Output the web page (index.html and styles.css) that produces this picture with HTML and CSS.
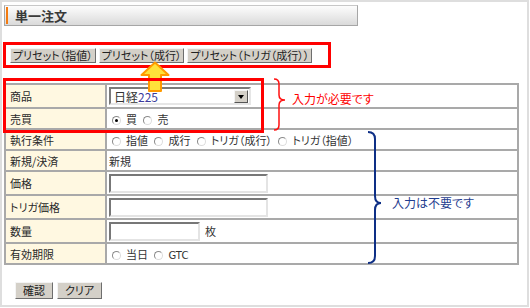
FILE: index.html
```html
<!DOCTYPE html>
<html lang="ja">

<head>
    <meta charset="UTF-8">
    <title>単一注文</title>
    <link rel="stylesheet" href="styles.css">
</head>

<body>
    <div class="frame">
        <div class="title-bar">
            <h1>単一注文</h1>
        </div>

        <div class="preset-box">
            <button class="btn">プリセット（指値）</button>
            <button class="btn">プリセット（成行）</button>
            <button class="btn">プリセット（トリガ（成行））</button>
        </div>

        <table class="order">
            <tr class="row-tall">
                <th>商品</th>
                <td>
                    <div class="select">
                        <span class="select-value">日経<span class="num">225</span></span>
                        <span class="select-btn"></span>
                    </div>
                </td>
            </tr>
            <tr>
                <th>売買</th>
                <td>
                    <span class="radio checked"></span><span class="opt">買</span>
                    <span class="radio"></span><span class="opt">売</span>
                </td>
            </tr>
            <tr>
                <th>執行条件</th>
                <td>
                    <span class="radio"></span><span class="opt">指値</span>
                    <span class="radio"></span><span class="opt">成行</span>
                    <span class="radio"></span><span class="opt">トリガ（成行）</span>
                    <span class="radio"></span><span class="opt">トリガ（指値）</span>
                </td>
            </tr>
            <tr>
                <th>新規/決済</th>
                <td class="plain">新規</td>
            </tr>
            <tr class="row-tall">
                <th>価格</th>
                <td><input type="text" class="text-input"></td>
            </tr>
            <tr class="row-tall">
                <th>トリガ価格</th>
                <td><input type="text" class="text-input"></td>
            </tr>
            <tr class="row-tall">
                <th>数量</th>
                <td><input type="text" class="text-input qty"><span class="unit">枚</span></td>
            </tr>
            <tr>
                <th>有効期限</th>
                <td>
                    <span class="radio"></span><span class="opt">当日</span>
                    <span class="radio"></span><span class="opt latin">GTC</span>
                </td>
            </tr>
        </table>

        <div class="actions">
            <button class="btn btn-lg">確認</button>
            <button class="btn btn-lg">クリア</button>
        </div>

        <!-- annotations -->
        <svg class="arrow" width="30" height="31" viewBox="0 0 30 31">
            <polygon points="15,1.5 28.5,14 21,14 21,30 9,30 9,14 1.5,14" fill="#ffe23a" stroke="#ff9a00" stroke-width="2" stroke-linejoin="round" />
        </svg>
        <div class="mark-required"></div>
        <svg class="brace-red" width="14" height="53" viewBox="0 0 14 53">
            <path d="M1,1 Q6,1 6,6 L6,17 Q6,22 12,22 Q6,22 6,27 L6,47 Q6,52 1,52" fill="none" stroke="#ff1010" stroke-width="1.5" />
        </svg>
        <p class="note note-red">入力が必要です</p>
        <svg class="brace-blue" width="16" height="133" viewBox="0 0 16 133">
            <path d="M1,1 Q8,1 8,8 L8,65 Q8,72 14,72 Q8,72 8,79 L8,125 Q8,132 1,132" fill="none" stroke="#0e2f86" stroke-width="2" />
        </svg>
        <p class="note note-blue">入力は不要です</p>
    </div>
</body>

</html>
```

FILE: styles.css
```css
* {
    box-sizing: border-box;
}

body {
    margin: 0;
    background: #fff;
    font-family: "Noto Sans CJK JP", sans-serif;
    font-size: 11px;
    font-feature-settings: "palt";
    color: #333;
}

.frame {
    position: relative;
    width: 529px;
    height: 307px;
    border: 2px solid #dedede;
}

.title-bar {
    margin: 3px 0 0 2px;
    width: 354px;
    height: 21px;
    padding: 1px 0 1px 1px;
    border: 1px solid #a6a6a6;
    border-top-color: #c8c8c8;
    background: linear-gradient(#fdfdfd, #dadada);
}

.title-bar h1 {
    margin: 0;
    height: 100%;
    padding-left: 7px;
    border-left: 2px solid #f47b10;
    font-size: 13px;
    line-height: 17px;
    font-weight: bold;
    color: #3a3a3a;
}

.preset-box {
    display: flex;
    gap: 3px;
    width: fit-content;
    margin: 16px 0 0 1px;
    padding: 3px 16px 2px 4px;
    border: 3px solid #ff0000;
}

.btn {
    height: 15px;
    padding: 0 2px;
    background: #d4d0c8;
    border: 1px solid;
    border-color: #f4f4f4 #6e6e6e #6e6e6e #f4f4f4;
    font-family: inherit;
    font-size: 11px;
    font-feature-settings: "palt";
    line-height: 13px;
    color: #222;
}

.btn-lg {
    height: 17px;
    padding: 0 7px;
    line-height: 15px;
}

.order {
    margin: 15px 0 0 2px;
    width: 515px;
    border-collapse: collapse;
}

.order th,
.order td {
    height: 21px;
    padding: 0 0 0 2px;
    border: 2px solid #a9a9a9;
    text-align: left;
    vertical-align: middle;
    font-weight: normal;
    white-space: nowrap;
}

.order th {
    width: 101px;
    padding-left: 4px;
    background: #fff8e1;
    color: #2a2a2a;
}

.order .row-tall th,
.order .row-tall td {
    height: 24px;
}

.select {
    display: flex;
    align-items: center;
    justify-content: space-between;
    width: 142px;
    height: 18px;
    padding: 0 1px 0 3px;
    border: 2px solid;
    border-color: #7a7a7a #e6e6e6 #e6e6e6 #7a7a7a;
    background: #fff;
    font-size: 12px;
}

.select .num {
    color: #3a3a9c;
}

.select-btn {
    position: relative;
    width: 14px;
    height: 13px;
    background: #d4d0c8;
    border: 1px solid;
    border-color: #f4f4f4 #555 #555 #f4f4f4;
}

.select-btn::after {
    content: "";
    position: absolute;
    left: 3px;
    top: 4px;
    border-left: 3px solid transparent;
    border-right: 3px solid transparent;
    border-top: 4px solid #000;
}

.radio {
    position: relative;
    display: inline-block;
    width: 9px;
    height: 9px;
    margin: 0 5px 0 3px;
    border: 1px solid;
    border-color: #8a8a8a #dcdcdc #dcdcdc #8a8a8a;
    border-radius: 50%;
    background: #fff;
    vertical-align: -1px;
}

.radio.checked::after {
    content: "";
    position: absolute;
    left: 2px;
    top: 2px;
    width: 3px;
    height: 3px;
    border-radius: 50%;
    background: #000;
}

.opt {
    margin-right: 1px;
}

.latin {
    font-family: "DejaVu Sans", sans-serif;
    font-size: 10px;
}

.text-input {
    width: 159px;
    height: 19px;
    margin: 0;
    border: 2px solid;
    border-color: #777 #e4e4e4 #e4e4e4 #777;
    vertical-align: middle;
}

.text-input.qty {
    width: 91px;
}

.unit {
    margin-left: 5px;
    vertical-align: middle;
}

.actions {
    display: flex;
    gap: 4px;
    margin: 17px 0 0 13px;
}

/* annotations drawn over the form */
.arrow {
    position: absolute;
    left: 138px;
    top: 59px;
}

.mark-required {
    position: absolute;
    left: 1px;
    top: 76px;
    width: 261px;
    height: 55px;
    border: 3px solid #ff0000;
}

.brace-red {
    position: absolute;
    left: 271px;
    top: 76px;
}

.brace-blue {
    position: absolute;
    left: 365px;
    top: 129px;
}

.note {
    position: absolute;
    margin: 0;
    font-size: 12px;
    line-height: 16px;
    white-space: nowrap;
}

.note-red {
    left: 290px;
    top: 89px;
    color: #ff0000;
}

.note-blue {
    left: 390px;
    top: 193px;
    color: #1f3d8f;
}
```
